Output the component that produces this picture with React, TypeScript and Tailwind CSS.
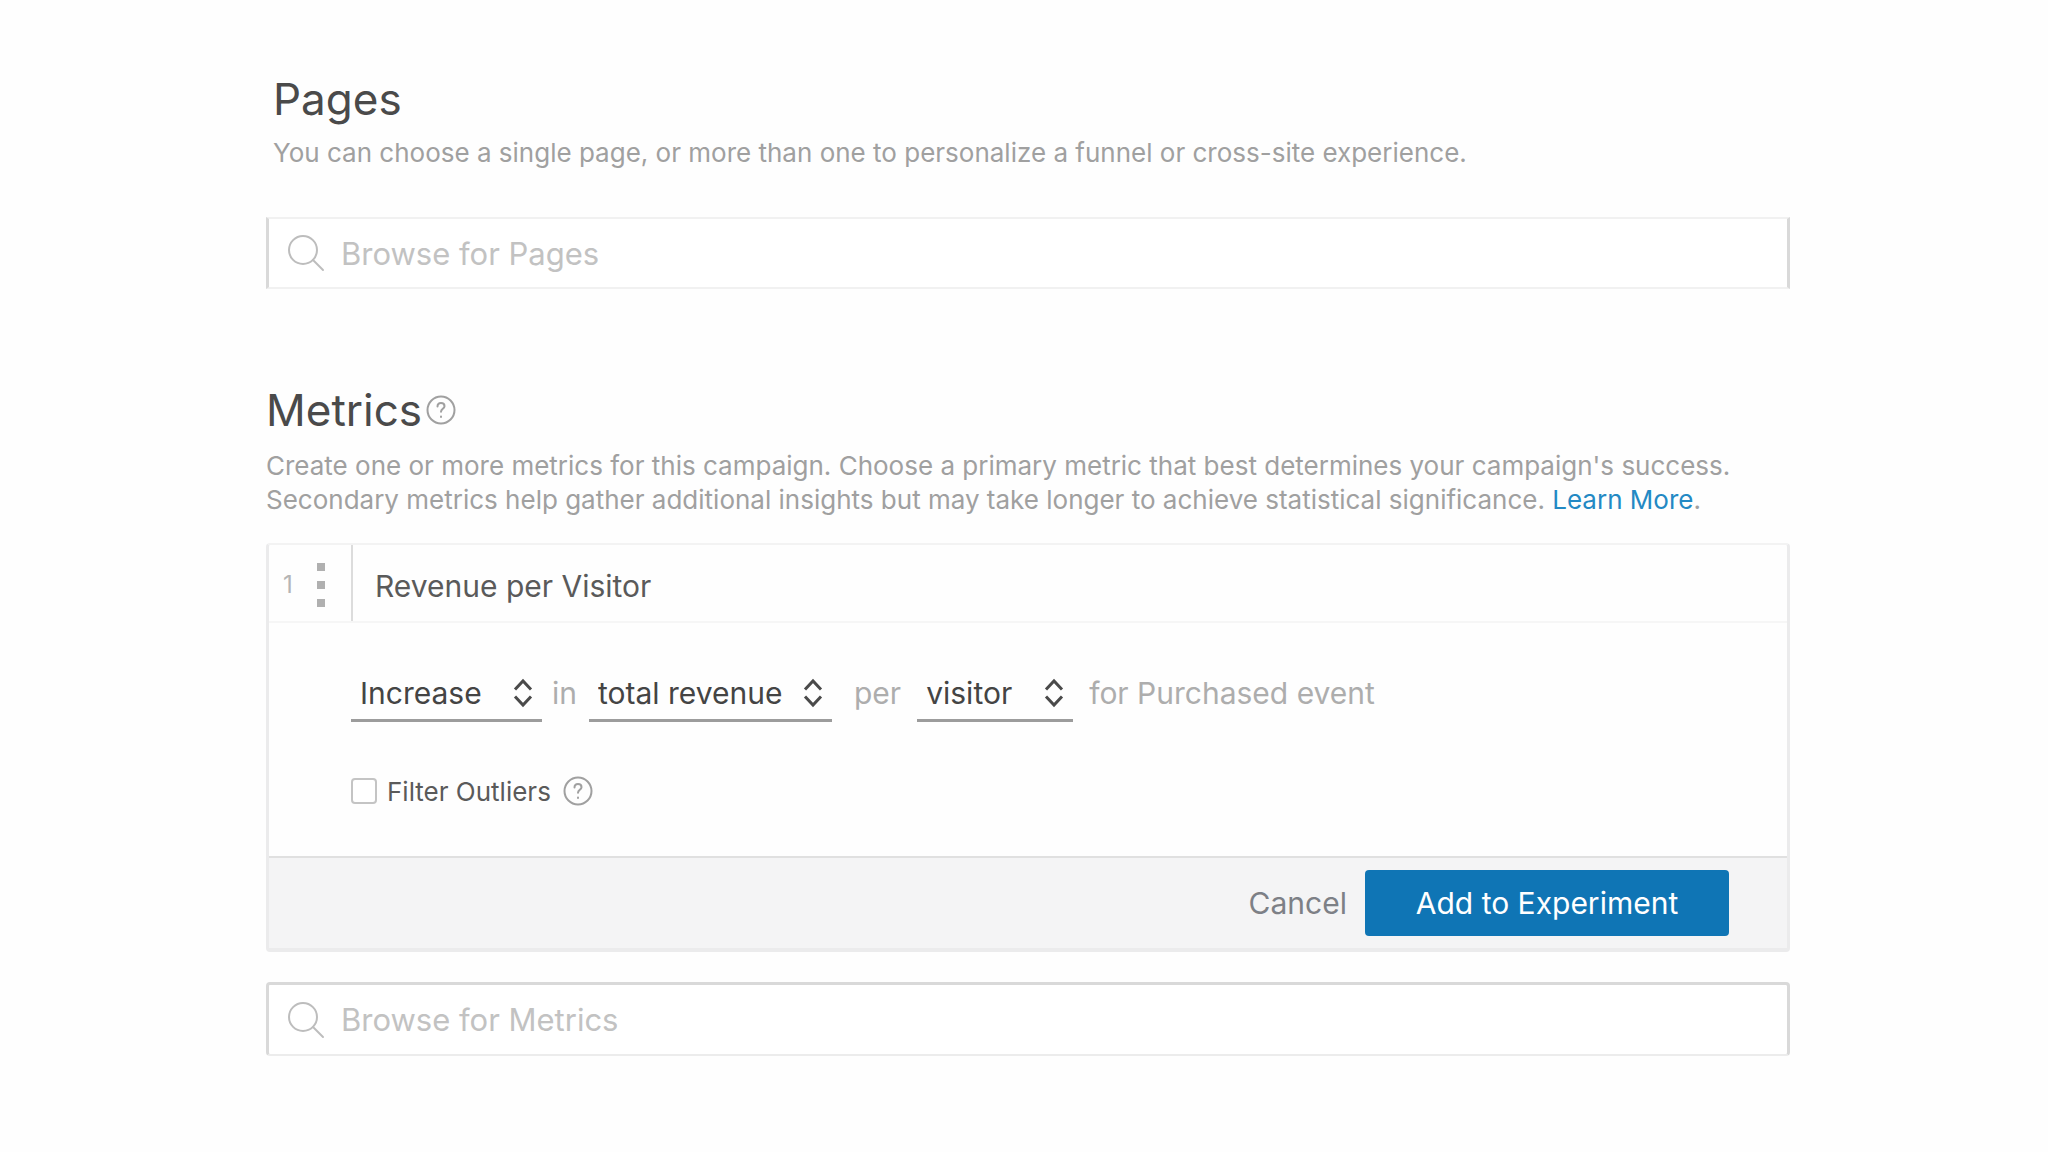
import { useState } from "react";
import type { ReactNode } from "react";

// Search icon SVG
function SearchIcon() {
    return (
        <svg
            width="38"
            height="38"
            viewBox="0 0 38 38"
            fill="none"
            stroke="#bdbdbd"
            strokeWidth="2"
            strokeLinecap="round"
            className="shrink-0"
            aria-hidden="true"
        >
            <circle cx="16" cy="16" r="14" />
            <path d="M26 26l10 10" />
        </svg>
    );
}

// Question mark in a circle
function HelpIcon() {
    return (
        <svg
            width="30"
            height="30"
            viewBox="0 0 30 30"
            fill="none"
            stroke="#a0a0a0"
            strokeWidth="2"
            strokeLinecap="round"
            aria-hidden="true"
        >
            <circle cx="15" cy="15" r="13.5" />
            <path d="M11.5 11.5c0-2.2 1.5-3.5 3.5-3.5s3.5 1.3 3.5 3.2c0 2.6-3.5 2.7-3.5 5.6" />
            <path d="M15 21.500v.5" />
        </svg>
    );
}

// Up / down arrows of a select
function SortIcon() {
    return (
        <svg
            width="20"
            height="30"
            viewBox="0 0 20 30"
            fill="none"
            stroke="#4a4a4a"
            strokeWidth="3"
            className="pointer-events-none absolute right-[9px] top-3"
            aria-hidden="true"
        >
            <path d="M2 11.500l8-8.500 8 8.500" />
            <path d="M2 18.500l8 8.500 8-8.500" />
        </svg>
    );
}

interface BrowseFieldProps {
    label: string;
    className: string;
}

function BrowseField({ label, className }: BrowseFieldProps) {
    return (
        <div className={`flex items-center gap-4 bg-white pl-[18px] pr-4 ${className}`}>
            <SearchIcon />
            <input
                type="text"
                aria-label={label}
                placeholder={label}
                className="h-full min-w-0 flex-1 bg-transparent text-[31px] text-[#555] outline-none placeholder:text-[#c2c2c2]"
            />
        </div>
    );
}

interface InlineSelectProps {
    label: string;
    options: string[];
    className: string;
}

function InlineSelect({ label, options, className }: InlineSelectProps) {
    return (
        <div className={`relative ${className}`}>
            <select
                aria-label={label}
                className="h-14 w-full appearance-none border-b-[3px] border-[#9c9c9c] bg-transparent pl-[9px] text-3xl text-[#444] outline-none"
            >
                {options.map((option) => (
                    <option key={option}>{option}</option>
                ))}
            </select>
            <SortIcon />
        </div>
    );
}

function Word({ children }: { children: ReactNode }) {
    return <span className="pb-[3px] text-3xl text-[#adadad]">{children}</span>;
}

function MetricCard() {
    const [filterOutliers, setFilterOutliers] = useState(false);

    return (
        <div className="mt-[26px] rounded-sm border-x-[3px] border-b-4 border-t-2 border-[#ebebec] border-t-[#f3f3f3]">
            {/* Header */}
            <div className="flex h-[78px] border-b-2 border-[#f6f6f6]">
                <div className="flex w-[84px] items-center gap-6 border-r-2 border-[#dcdcdc] pl-3.5 pt-1">
                    <span className="text-2xl text-[#b5b5b5]">1</span>
                    <div className="flex flex-col gap-[10px]">
                        <span className="size-2 bg-[#b0b0b0]" />
                        <span className="size-2 bg-[#b0b0b0]" />
                        <span className="size-2 bg-[#b0b0b0]" />
                    </div>
                </div>
                <h3 className="flex items-center pl-[22px] pt-1.5 text-3xl text-[#5a5a5a]">
                    Revenue per Visitor
                </h3>
            </div>

            {/* Metric definition */}
            <div className="pb-[50px] pl-[82px] pt-[43px]">
                <div className="flex items-center">
                    <InlineSelect
                        label="Direction"
                        options={["Increase", "Decrease"]}
                        className="mr-2.5 w-[191px]"
                    />
                    <Word>in</Word>
                    <InlineSelect
                        label="Measure"
                        options={["total revenue", "total conversions"]}
                        className="ml-3 mr-[22px] w-[243px]"
                    />
                    <Word>per</Word>
                    <InlineSelect
                        label="Unit"
                        options={["visitor", "session"]}
                        className="ml-4 mr-4 w-[156px]"
                    />
                    <Word>for Purchased event</Word>
                </div>

                <div className="mt-[54px] flex h-[30px] items-center">
                    <label className="flex items-center gap-2.5 text-[26px] text-[#5a5a5a]">
                        <input
                            type="checkbox"
                            checked={filterOutliers}
                            onChange={(e) => setFilterOutliers(e.target.checked)}
                            className="size-[26px] appearance-none rounded border-2 border-[#c4c4c4] bg-white checked:bg-[#0f75b5]"
                        />
                        Filter Outliers
                    </label>
                    <button type="button" aria-label="About outliers" className="ml-3">
                        <HelpIcon />
                    </button>
                </div>
            </div>

            {/* Actions */}
            <div className="flex items-center justify-end gap-[18px] border-t-2 border-[#e0e0e0] bg-[#f4f4f5] pb-3 pr-[58px] pt-3">
                <button type="button" className="text-3xl text-[#7d8086]">
                    Cancel
                </button>
                <button
                    type="button"
                    className="h-[66px] w-[364px] rounded bg-[#0f75b5] text-3xl text-white"
                >
                    Add to Experiment
                </button>
            </div>
        </div>
    );
}

export default function App() {
    return (
        <main className="min-h-screen bg-[#fefefe] pb-20 pl-[266px] pr-[258px] pt-[75px] font-['Inter',sans-serif]">
            <section>
                <div className="pl-[7px]">
                    <h2 className="text-[44px] leading-[48px] text-[#4a4a4a]">Pages</h2>
                    <p className="mt-[13px] text-[26px] leading-[34px] text-[#a0a0a0]">
                        You can choose a single page, or more than one to personalize a funnel or cross-site experience.
                    </p>
                </div>
                <BrowseField
                    label="Browse for Pages"
                    className="mt-[47px] h-[72px] border-x-[3px] border-y-2 border-[#d9d9d9] border-y-[#f1f1f1]"
                />
            </section>

            <section className="mt-[97px]">
                <div className="flex items-center gap-1">
                    <h2 className="text-[44px] leading-[48px] text-[#4a4a4a]">Metrics</h2>
                    <button type="button" aria-label="About metrics">
                        <HelpIcon />
                    </button>
                </div>
                <p className="mt-[15px] text-[26px] leading-[34px] text-[#a0a0a0]">
                    <span>
                        Create one or more metrics for this campaign. Choose a primary metric that best determines your
                        campaign's success.
                    </span>{" "}
                    <span>
                        Secondary metrics help gather additional insights but may take longer to achieve statistical
                        significance.
                    </span>{" "}
                    <a href="#learn-more" className="text-[#2389c4]">
                        Learn More
                    </a>
                    .
                </p>

                <MetricCard />

                <BrowseField
                    label="Browse for Metrics"
                    className="mt-[30px] h-[74px] rounded-sm border-x-[3px] border-b-2 border-t-[3px] border-[#d9d9d9] border-b-[#ececec]"
                />
            </section>
        </main>
    );
}
